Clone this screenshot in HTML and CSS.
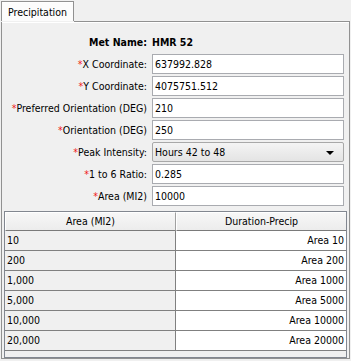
FILE: index.html
```html
<!DOCTYPE html>
<html>
<head>
<meta charset="utf-8">
<link rel="stylesheet" href="styles.css">
</head>
<body>
<div class="window">
  <div class="tabs">
    <div class="tab">Precipitation</div>
    <div class="tab-fill"></div>
  </div>
  <div class="panel">
    <div class="form">
      <div class="label bold">Met Name:</div>
      <div class="value bold">HMR 52</div>

      <div class="label"><span class="req">*</span>X Coordinate:</div>
      <div class="field">637992.828</div>

      <div class="label"><span class="req">*</span>Y Coordinate:</div>
      <div class="field">4075751.512</div>

      <div class="label"><span class="req">*</span>Preferred Orientation (DEG)</div>
      <div class="field">210</div>

      <div class="label"><span class="req">*</span>Orientation (DEG)</div>
      <div class="field">250</div>

      <div class="label"><span class="req">*</span>Peak Intensity:</div>
      <div class="combo"><span>Hours 42 to 48</span><span class="arrow"></span></div>

      <div class="label"><span class="req">*</span>1 to 6 Ratio:</div>
      <div class="field">0.285</div>

      <div class="label"><span class="req">*</span>Area (MI2)</div>
      <div class="field">10000</div>
    </div>

    <div class="pane">
      <div class="grid">
        <div class="th">Area (MI2)</div>
        <div class="th last">Duration-Precip</div>

        <div class="td">10</div><div class="td num">Area 10</div>
        <div class="td">200</div><div class="td num">Area 200</div>
        <div class="td">1,000</div><div class="td num">Area 1000</div>
        <div class="td">5,000</div><div class="td num">Area 5000</div>
        <div class="td">10,000</div><div class="td num">Area 10000</div>
        <div class="td">20,000</div><div class="td num">Area 20000</div>
      </div>
    </div>
  </div>
</div>
</body>
</html>
```
FILE: styles.css
```css
html, body {
  margin: 0;
  padding: 0;
  background: #f0f0f0;
}
body {
  font-family: "DejaVu Sans Condensed", "DejaVu Sans", sans-serif;
  font-size: 10.5px;
  color: #000;
}
.window {
  padding: 1px 0 0 1px;
  width: 349px;
}
.tabs {
  display: flex;
  height: 21px;
}
.tab {
  width: 71px;
  height: 20px;
  border: 1px solid #919191;
  border-bottom: none;
  background: #fcfcfc;
  box-shadow: inset 0 1px 0 #fff;
  padding-left: 6px;
  box-sizing: border-box;
  width: 73px;
  line-height: 19px;
  padding-top: 1px;
}
.tab-fill {
  flex: 1;
  border-bottom: 1px solid #919191;
  box-sizing: border-box;
}
.panel {
  height: 337px;
  box-sizing: border-box;
  border: 1px solid #919191;
  border-top: none;
  background: #f0f0f0;
  box-shadow: inset 0 1px 0 #fff;
  padding-top: 10px;
}
.form {
  display: grid;
  grid-template-columns: 145px 192px;
  grid-auto-rows: 20px;
  column-gap: 5px;
  row-gap: 2px;
}
.label {
  text-align: right;
  line-height: 20px;
  white-space: nowrap;
}
.bold { font-weight: bold; }
.value {
  line-height: 20px;
}
.req {
  color: #f01818;
}
.field {
  border: 1px solid #a9abb0;
  background: #fff;
  box-sizing: border-box;
  padding-left: 2px;
  line-height: 18px;
}
.combo {
  border: 1px solid #a8a8a8;
  border-radius: 2px;
  background: linear-gradient(#f4f4f4, #e4e4e4);
  box-sizing: border-box;
  padding-left: 2px;
  line-height: 18px;
  display: flex;
  justify-content: space-between;
  align-items: center;
}
.arrow {
  width: 0;
  height: 0;
  border-left: 4px solid transparent;
  border-right: 4px solid transparent;
  border-top: 4px solid #000;
  margin-right: 9px;
  margin-top: 2px;
}
.pane {
  margin: 5px 2px 0 2px;
  height: 147px;
  box-sizing: border-box;
  border: 1px solid #828790;
  background: #f0f0f0;
}
.grid {
  display: grid;
  grid-template-columns: 171px 1fr;
  grid-template-rows: 19px;
  grid-auto-rows: 20px;
}
.th {
  text-align: center;
  line-height: 17px;
  background: linear-gradient(#f7f7f7, #ececec);
  border-top: 1px solid #fff;
  border-left: 1px solid #fff;
  border-right: 1px solid #a0a0a0;
  border-bottom: 1px solid #7a7a7a;
  box-sizing: border-box;
}
.th.last {
  border-right: none;
}
.td {
  line-height: 19px;
  border-bottom: 1px solid #808080;
  border-right: 1px solid #808080;
  box-sizing: border-box;
  padding-left: 2px;
  background: #f0f0f0;
}
.td.num {
  background: #fff;
  text-align: right;
  border-right: none;
  padding-right: 2px;
}
```
